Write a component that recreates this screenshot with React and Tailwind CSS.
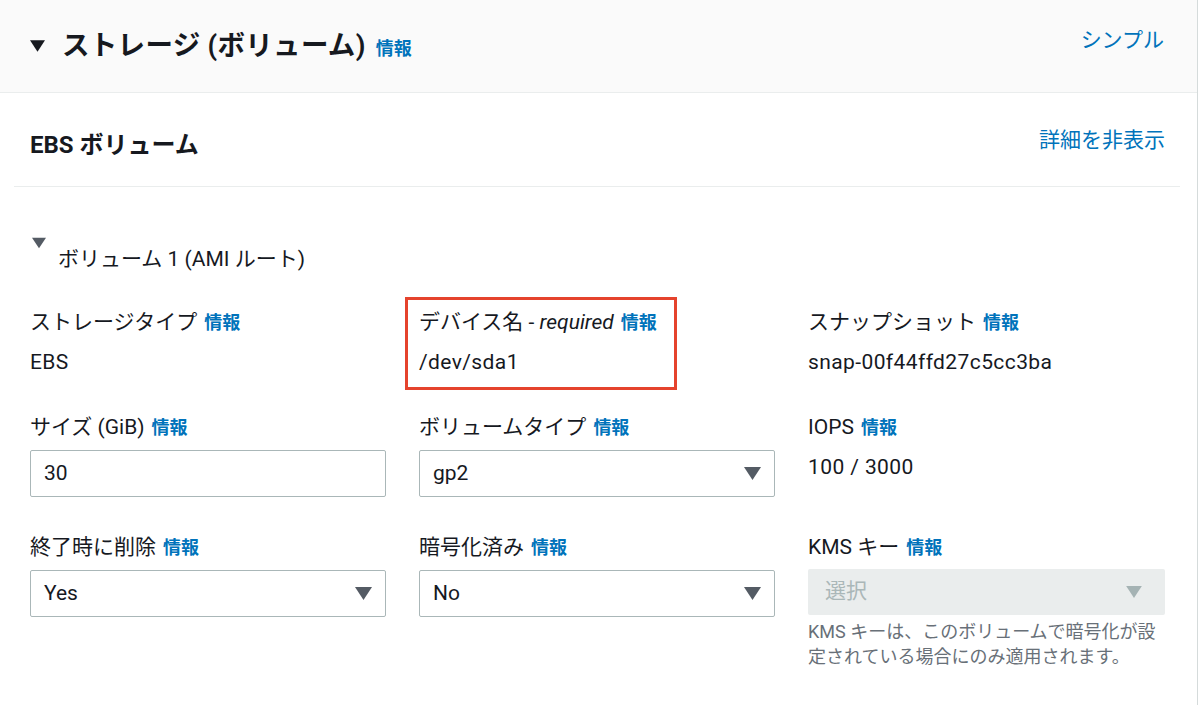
import React from 'react';

const FONT = { fontFamily: 'Roboto, "Noto Sans CJK JP", sans-serif' };

const Caret = ({ className = '', color = '#545b64', w = 17, h = 13 }) => (
  <svg width={w} height={h} viewBox="0 0 17 13" className={className}>
    <polygon points="0,0 17,0 8.5,13" fill={color} />
  </svg>
);

const Info = () => (
  <span className="ml-[7px] text-[18px] font-bold text-[#0073bb]">情報</span>
);

const Label = ({ children }) => (
  <div className="h-[30px] leading-[30px] text-[21px] text-[#16191f] whitespace-nowrap">
    {children}
    <Info />
  </div>
);

const TextValue = ({ children }) => (
  <div className="mt-[10px] leading-[30px] text-[21px] tracking-[0.4px] text-[#16191f]">{children}</div>
);

const Input = ({ value }) => (
  <div className="mt-[8px] h-[47px] border border-[#aab7b8] rounded-[2px] px-[13px] flex items-center text-[21px] text-[#16191f]">
    {value}
  </div>
);

const Select = ({ value }) => (
  <div className="mt-[8px] h-[47px] border border-[#aab7b8] rounded-[2px] pl-[13px] pr-[13px] flex items-center justify-between text-[21px] text-[#16191f]">
    <span>{value}</span>
    <Caret />
  </div>
);

export default function App() {
  return (
    <div className="w-[1200px] h-[705px] bg-white overflow-hidden" style={FONT}>
      <div className="w-[1198px] h-full border-r border-[#d5dbdb]">
        <div className="h-[93px] bg-[#fafafa] border-b border-[#eaeded] flex items-center justify-between pl-[30px] pr-[33px]">
          <div className="flex items-center">
            <Caret color="#16191f" w={15} h={12} className="mr-[17px]" />
            <span className="text-[27.5px] font-bold tracking-[0.3px] text-[#16191f]">ストレージ (ボリューム)</span>
            <span className="ml-[10px] mt-[4px] text-[18px] font-bold text-[#0073bb]">情報</span>
          </div>
          <span className="mb-[10px] text-[21px] text-[#0073bb]">シンプル</span>
        </div>

        <div className="pl-[14px] pr-[17px]">
          <div className="h-[94px] border-b border-[#eaeded] flex items-center justify-between pl-[16px] pr-[15px] pt-[10px]">
            <span className="text-[24px] font-bold text-[#16191f]">EBS ボリューム</span>
            <span className="mb-[8px] text-[21px] text-[#0073bb]">詳細を非表示</span>
          </div>

          <div className="px-[16px]">
            <div className="pt-[48px] flex items-start">
              <Caret color="#545b64" w={14} h={12} className="ml-[2px] mt-[2px]" />
              <span className="ml-[12px] mt-[9px] leading-[30px] text-[21px] text-[#16191f]">
                ボリューム 1 (AMI ルート)
              </span>
            </div>

            <div className="mt-[33px] grid grid-cols-[356px_356px_357px] gap-x-[33px] gap-y-[35px]">
              <div>
                <Label>ストレージタイプ</Label>
                <TextValue>EBS</TextValue>
              </div>
              <div className="relative">
                <Label>
                  デバイス名 - <span className="italic">required</span>
                </Label>
                <TextValue>/dev/sda1</TextValue>
                <div className="absolute left-[-14px] top-[-10px] w-[272px] h-[93px] border-[3px] border-[#e5432d]" />
              </div>
              <div>
                <Label>スナップショット</Label>
                <TextValue>snap-00f44ffd27c5cc3ba</TextValue>
              </div>

              <div>
                <Label>サイズ (GiB)</Label>
                <Input value="30" />
              </div>
              <div>
                <Label>ボリュームタイプ</Label>
                <Select value="gp2" />
              </div>
              <div>
                <Label>IOPS</Label>
                <TextValue>100 / 3000</TextValue>
              </div>

              <div>
                <Label>終了時に削除</Label>
                <Select value="Yes" />
              </div>
              <div>
                <Label>暗号化済み</Label>
                <Select value="No" />
              </div>
              <div>
                <Label>KMS キー</Label>
                <div className="mt-[7px] h-[46px] bg-[#eaeded] rounded-[2px] pl-[17px] pr-[23px] flex items-center justify-between text-[21px] text-[#aab7b8]">
                  <span>選択</span>
                  <Caret color="#a5b3b4" w={16} h={12} />
                </div>
                <p className="mt-[4px] text-[18px] leading-[25px] text-[#687078]">
                  KMS キーは、このボリュームで暗号化が設定されている場合にのみ適用されます。
                </p>
              </div>
            </div>
          </div>
        </div>
      </div>
    </div>
  );
}
